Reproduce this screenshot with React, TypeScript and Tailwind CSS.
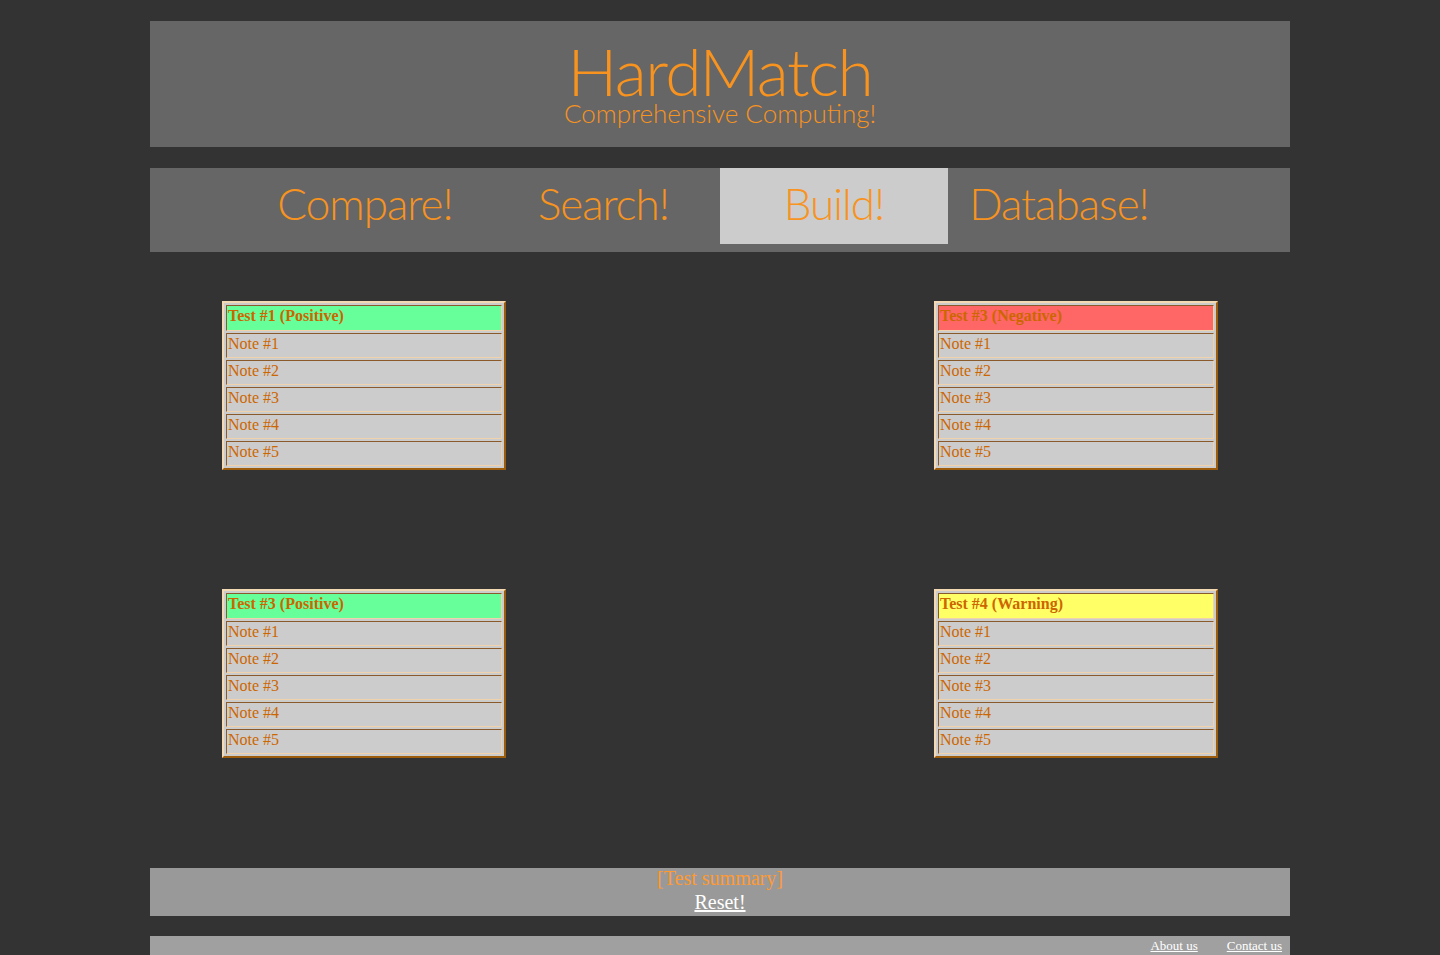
import React from "react";

type Test = { title: string; tone: "pos" | "neg" | "warn" };

const toneBg: Record<Test["tone"], string> = {
  pos: "bg-[#66ff99]",
  neg: "bg-[#ff6666]",
  warn: "bg-[#ffff66]",
};

function TestTable({ test }: { test: Test }) {
  const cell =
    "p-0 pl-[1px] pt-[1px] border border-t-[#8b5a2b] border-l-[#8b5a2b] border-b-[#f0d2ac] border-r-[#f0d2ac] align-top leading-[18px]";
  return (
    <table className="w-[284px] border-separate border-spacing-[2px] border-2 border-t-[#f3dab4] border-l-[#f3dab4] border-b-[#9c5c0c] border-r-[#9c5c0c] bg-[#cccccc] text-[16px] text-[#cc6600] font-['Liberation_Serif',serif]">
      <tbody>
        <tr>
          <td className={`${cell} h-[26px] font-bold ${toneBg[test.tone]}`}>{test.title}</td>
        </tr>
        {[1, 2, 3, 4, 5].map((n) => (
          <tr key={n}>
            <td className={`${cell} h-[25px]`}>Note #{n}</td>
          </tr>
        ))}
      </tbody>
    </table>
  );
}

const navItems = [
  { label: "Compare!", w: "w-[264px]" },
  { label: "Search!", w: "w-[223px] pr-[10px]" },
  { label: "Build!", w: "w-[228px]", active: true },
  { label: "Database!", w: "w-[222px]" },
];

export default function App() {
  return (
    <div className="min-h-[955px] bg-[#333333] pt-[21px] font-['Lato',sans-serif]">
      <div className="mx-auto w-[1140px]">
        {/* Header */}
        <div className="h-[126px] bg-[#666666] flex flex-col items-center text-[#f7931e] font-light">
          <div className="text-[66px] leading-[60px] mt-[20px] tracking-[-1.5px]">HardMatch</div>
          <div className="text-[26px] leading-[24px]">Comprehensive Computing!</div>
        </div>

        {/* Nav */}
        <div className="mt-[21px] h-[84px] bg-[#666666] flex pl-[83px] text-[#f7931e] font-light">
          {navItems.map((item) => (
            <div
              key={item.label}
              className={`${item.w} h-[76px] pb-[7px] flex items-center justify-center text-[44px] leading-none tracking-[-1px] ${
                item.active ? "bg-[#cccccc]" : ""
              }`}
            >
              {item.label}
            </div>
          ))}
        </div>

        {/* Test grid */}
        <div className="px-[72px] pt-[49px] flex flex-col gap-[119px]">
          <div className="flex justify-between">
            <TestTable test={{ title: "Test #1 (Positive)", tone: "pos" }} />
            <TestTable test={{ title: "Test #3 (Negative)", tone: "neg" }} />
          </div>
          <div className="flex justify-between">
            <TestTable test={{ title: "Test #3 (Positive)", tone: "pos" }} />
            <TestTable test={{ title: "Test #4 (Warning)", tone: "warn" }} />
          </div>
        </div>

        {/* Summary */}
        <div className="mt-[110px] h-[48px] bg-[#999999] flex flex-col items-center font-['Liberation_Serif',serif] text-[20px] leading-[24px]">
          <span className="text-[#ff9933] -mt-[2px]">[Test summary]</span>
          <a href="#" className="text-white underline">
            Reset!
          </a>
        </div>

        {/* Footer */}
        <div className="mt-[20px] h-[24px] bg-[#a0a0a0] flex justify-end items-start gap-[29px] pr-[8px] pt-[2px] font-['Liberation_Serif',serif] text-[13px] leading-[16px]">
          <a href="#" className="text-white underline">About us</a>
          <a href="#" className="text-white underline">Contact us</a>
        </div>
      </div>
    </div>
  );
}
